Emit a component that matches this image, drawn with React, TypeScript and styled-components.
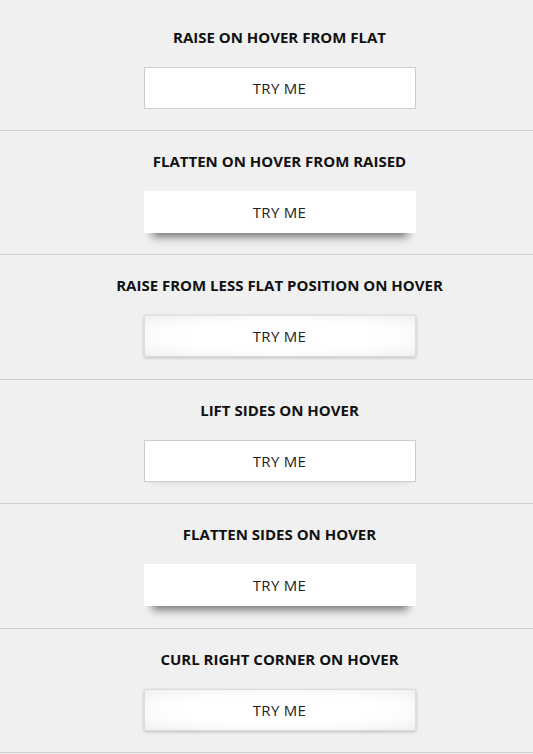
import React from 'react';
import styled, { createGlobalStyle, css } from 'styled-components';

const GlobalStyle = createGlobalStyle`
  html, body {
    margin: 0;
    padding: 0;
    background: #f0f0f0;
  }
  body {
    font-family: "Open Sans", "Liberation Sans", sans-serif;
  }
`;

const Page = styled.div`
  padding-top: 6.6px;
  background: #f0f0f0;
`;

const Section = styled.section`
  height: 124.4px;
  border-bottom: 1px solid #cdcdcd;
  padding-left: 26px;
  display: flex;
  flex-direction: column;
  align-items: center;
  box-sizing: border-box;
`;

const Title = styled.h3`
  margin: 20px 0 0;
  height: 20px;
  line-height: 20px;
  font-size: 15px;
  font-weight: 700;
  color: #111;
`;

type Effect = 'flat' | 'raised' | 'soft' | 'lift' | 'curl';

const effects: Record<Effect, ReturnType<typeof css>> = {
  flat: css`
    border: 1px solid #cccccc;
  `,
  raised: css`
    border: none;
    box-shadow: 0 12px 9px -8px rgba(0, 0, 0, 0.5);
  `,
  soft: css`
    border: 1px solid #dddddd;
    background: radial-gradient(ellipse at center, #ffffff 55%, #f4f4f4 100%);
    box-shadow: 0 1px 3px rgba(0, 0, 0, 0.22), inset 0 0 12px rgba(0, 0, 0, 0.03);
  `,
  lift: css`
    border: 1px solid #cccccc;
    box-shadow: 0 6px 6px -6px rgba(0, 0, 0, 0.12);
  `,
  curl: css`
    border: 1px solid #dddddd;
    background: radial-gradient(ellipse at center, #ffffff 55%, #f4f4f4 100%);
    box-shadow: 0 1px 3px rgba(0, 0, 0, 0.22), inset 0 0 12px rgba(0, 0, 0, 0.03);
  `,
};

const TryButton = styled.button<{ $effect: Effect }>`
  margin-top: 20px;
  width: 272px;
  height: 42px;
  box-sizing: border-box;
  background: #ffffff;
  font-family: "Open Sans", "Liberation Sans", sans-serif;
  font-size: 15px;
  letter-spacing: 0.3px;
  color: #222;
  cursor: pointer;
  padding: 0;
  ${(p) => effects[p.$effect]}
`;

const demos: { title: string; effect: Effect }[] = [
  { title: 'RAISE ON HOVER FROM FLAT', effect: 'flat' },
  { title: 'FLATTEN ON HOVER FROM RAISED', effect: 'raised' },
  { title: 'RAISE FROM LESS FLAT POSITION ON HOVER', effect: 'soft' },
  { title: 'LIFT SIDES ON HOVER', effect: 'lift' },
  { title: 'FLATTEN SIDES ON HOVER', effect: 'raised' },
  { title: 'CURL RIGHT CORNER ON HOVER', effect: 'curl' },
];

export default function App() {
  return (
    <>
      <GlobalStyle />
      <Page>
        {demos.map((d) => (
          <Section key={d.title}>
            <Title>{d.title}</Title>
            <TryButton $effect={d.effect}>TRY ME</TryButton>
          </Section>
        ))}
      </Page>
    </>
  );
}
